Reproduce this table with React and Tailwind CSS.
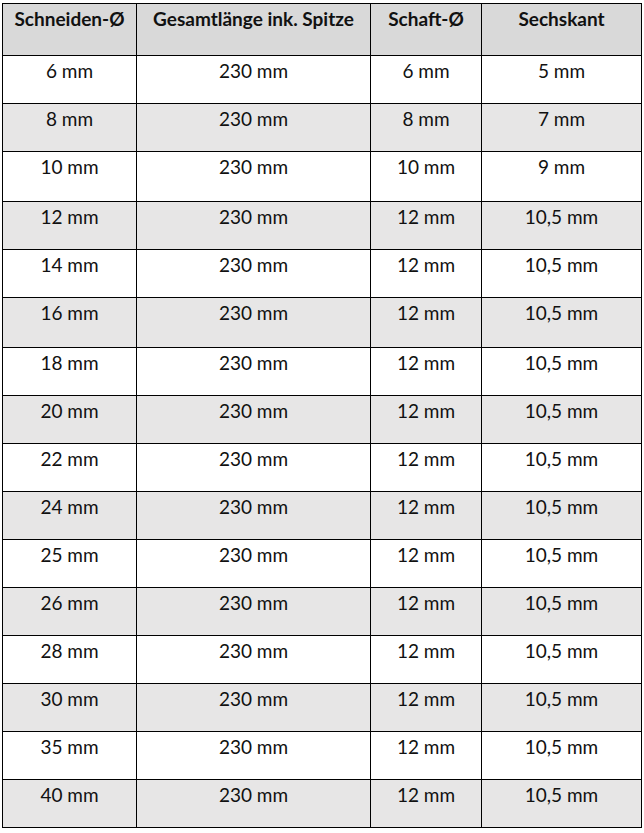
import React from "react";

const sizes = [6, 8, 10, 12, 14, 16, 18, 20, 22, 24, 25, 26, 28, 30, 35, 40];
const heights = [48, 48, 50, 48, 48, 50, 48, 48, 48, 48, 48, 48, 48, 48, 48, 48];

function shaft(d) {
  return d >= 12 ? 12 : d;
}
function hex(d) {
  if (d === 6) return "5";
  if (d === 8) return "7";
  if (d === 10) return "9";
  return "10,5";
}

export default function App() {
  return (
    <div className="bg-white w-[644px] h-[833px] pt-[3px] pl-[2px]" style={{ fontFamily: 'Lato, "Liberation Sans", sans-serif' }}>
      <table className="border-collapse text-[#111] text-[19px] leading-[24px] table-fixed">
        <colgroup>
          <col className="w-[134px]" />
          <col className="w-[234px]" />
          <col className="w-[111px]" />
          <col className="w-[160px]" />
        </colgroup>
        <thead>
          <tr className="bg-[#d9d9d9] h-[52px]">
            {["Schneiden-Ø", "Gesamtlänge ink. Spitze", "Schaft-Ø", "Sechskant"].map((h) => (
              <th key={h} className="border border-black align-top pt-[3px] font-bold text-center">
                {h}
              </th>
            ))}
          </tr>
        </thead>
        <tbody>
          {sizes.map((d, i) => (
            <tr key={d} className={i % 2 === 1 ? "bg-[#e7e6e6]" : "bg-white"} style={{ height: heights[i] }}>
              <td className="border border-black align-top pt-[3px] text-center">{d} mm</td>
              <td className="border border-black align-top pt-[3px] text-center">230 mm</td>
              <td className="border border-black align-top pt-[3px] text-center">{shaft(d)} mm</td>
              <td className="border border-black align-top pt-[3px] text-center">{hex(d)} mm</td>
            </tr>
          ))}
        </tbody>
      </table>
    </div>
  );
}
